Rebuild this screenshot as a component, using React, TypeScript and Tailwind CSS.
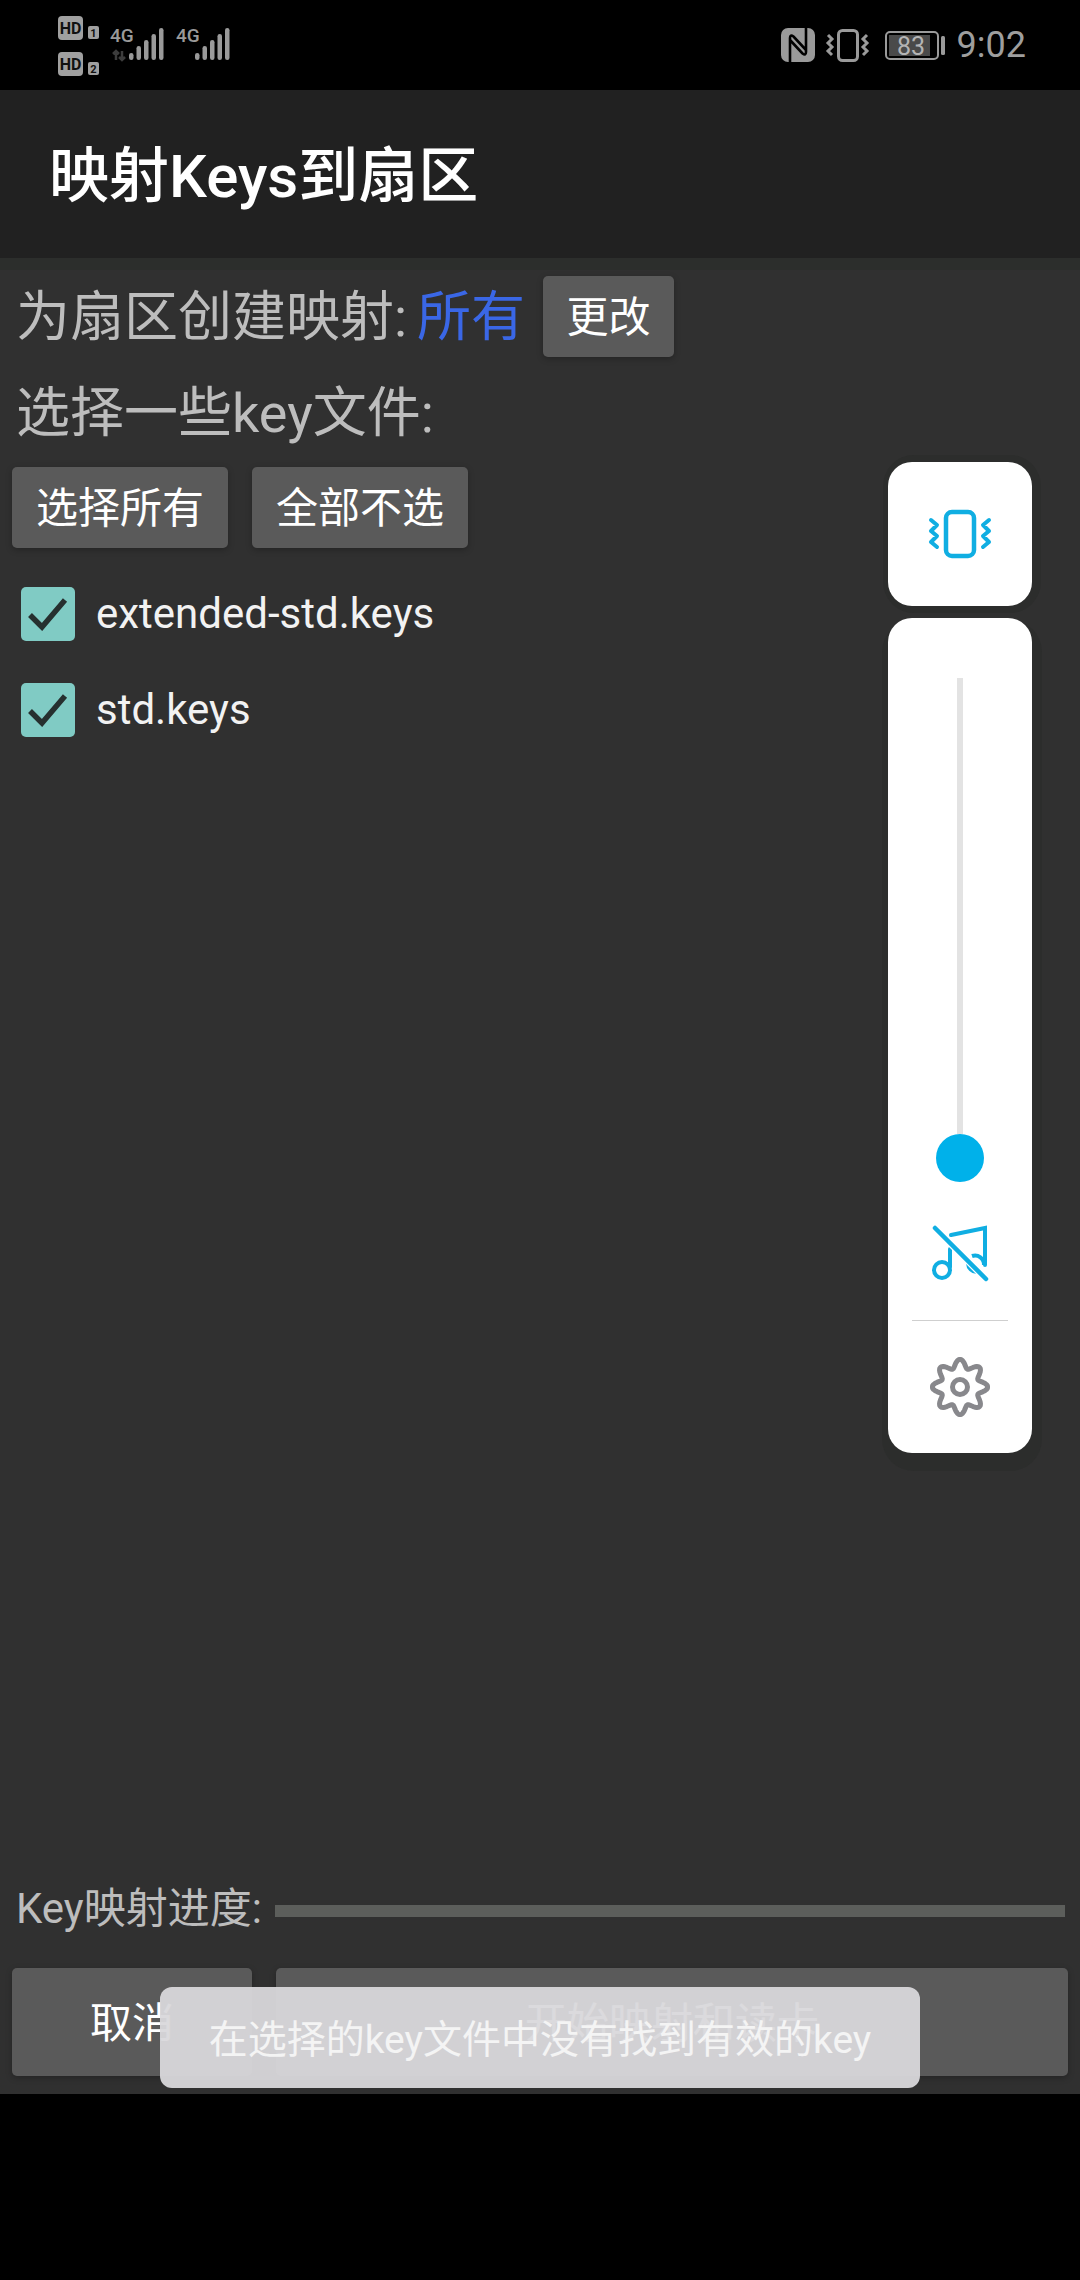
const cjk = "font-['Roboto','Noto_Sans_CJK_SC',sans-serif]";

// wavy outline for the 8 teeth of the settings gear
const gearPath =
  Array.from({ length: 128 }, (_, i) => {
    const a = (i / 128) * Math.PI * 2;
    const r = 23.5 + 4.2 * Math.cos(8 * a);
    return `${i === 0 ? "M" : "L"}${(30 + r * Math.sin(a)).toFixed(2)} ${(30 - r * Math.cos(a)).toFixed(2)}`;
  }).join("") + "Z";

function SignalBars({ x }: { x: number }) {
  const heights = [7, 14, 20, 26, 32];
  return (
    <>
      {heights.map((h, i) => (
        <rect key={i} x={x + i * 7.5} y={60 - h} width="4.5" height={h} rx="2.2" fill="#9a9a9a" />
      ))}
    </>
  );
}

function LeftStatus() {
  return (
    <svg width="176" height="90" viewBox="58 0 176 90">
      <rect x="58" y="16" width="25" height="24" rx="4" fill="#a0a0a0" />
      <text x="70.5" y="34" textAnchor="middle" fontSize="16" fontWeight="700" fontFamily="Roboto" fill="#111">HD</text>
      <rect x="88" y="26" width="11" height="13" rx="2" fill="#a0a0a0" />
      <text x="93.5" y="37" textAnchor="middle" fontSize="11" fontWeight="700" fontFamily="Roboto" fill="#111">1</text>
      <rect x="58" y="52" width="25" height="24" rx="4" fill="#a0a0a0" />
      <text x="70.5" y="70" textAnchor="middle" fontSize="16" fontWeight="700" fontFamily="Roboto" fill="#111">HD</text>
      <rect x="88" y="62" width="11" height="13" rx="2" fill="#a0a0a0" />
      <text x="93.5" y="73" textAnchor="middle" fontSize="11" fontWeight="700" fontFamily="Roboto" fill="#111">2</text>
      <text x="110" y="42" fontSize="19" fontWeight="500" fontFamily="Roboto" fill="#9a9a9a">4G</text>
      <path d="M116 60v-9m-3 3l3-3 3 3M122 51v9m-3-3l3 3 3-3" stroke="#3c3c3c" strokeWidth="2.5" fill="none" />
      <SignalBars x={129} />
      <text x="176" y="42" fontSize="19" fontWeight="500" fontFamily="Roboto" fill="#9a9a9a">4G</text>
      <SignalBars x={195} />
    </svg>
  );
}

function RightStatus() {
  return (
    <div className="flex items-center">
      <svg width="164" height="90" viewBox="782 0 164 90">
        <rect x="782" y="28" width="34" height="34" rx="7" fill="#9a9a9a" />
        <path d="M791 62V38q0-4 3.500-1.500L807 50M807 28v24q0 4-3.500 1.500L791 40" fill="none" stroke="#000000" strokeWidth="2.6" />
        <rect x="839.500" y="30.500" width="19" height="30" rx="4" fill="none" stroke="#9a9a9a" strokeWidth="3" />
        <path d="M829 35l4 4-4 4 4 4-4 4 4 4M868 35l-4 4 4 4-4 4 4 4-4 4" fill="none" stroke="#9a9a9a" strokeWidth="3" />
        <rect x="887" y="32" width="52" height="27" rx="4" fill="none" stroke="#9a9a9a" strokeWidth="2" />
        <rect x="890" y="35" width="41" height="21" fill="#4a4a4a" />
        <text x="912" y="55" textAnchor="middle" fontSize="25" fontFamily="Roboto" fill="#b4b4b4">83</text>
        <rect x="942" y="36" width="4" height="19" rx="1.5" fill="#9a9a9a" />
      </svg>
      <span className="ml-[12px] font-['Roboto',sans-serif] text-[36px] leading-none text-[#9e9e9e]">9:02</span>
    </div>
  );
}

function Checkbox({ label }: { label: string }) {
  return (
    <div className="flex items-center pl-[21px]">
      <div className="flex h-[54px] w-[54px] items-center justify-center rounded-[5px] bg-[#80cbc4]">
        <svg width="42" height="34" viewBox="0 0 42 34">
          <path d="M3 18l12 12L38 3" fill="none" stroke="#26302f" strokeWidth="5.5" />
        </svg>
      </div>
      <span className="ml-[21px] font-['Roboto',sans-serif] text-[42px] leading-none text-[#f2f2f2]">{label}</span>
    </div>
  );
}

function VolumePanel() {
  return (
    <div className="absolute left-[888px] top-[462px] flex w-[144px] flex-col gap-[12px]">
      <div className="flex h-[144px] items-center justify-center rounded-[24px] bg-white shadow-[2px_0_0_7px_#2c2d2c]">
        <svg width="64" height="56" viewBox="0 0 64 56" fill="none" stroke="#10aee2" strokeLinecap="round">
          <rect x="18" y="6" width="28" height="44" rx="6" strokeWidth="4.5" />
          <path d="M3 14l6 5-6 6 6 5-6 6 6 5M61 14l-6 5 6 6-6 5 6 6-6 5" strokeWidth="4" strokeLinejoin="round" />
        </svg>
      </div>
      <div className="flex h-[835px] flex-col items-center rounded-[24px] bg-white pt-[60px] shadow-[2px_10px_0_8px_#2c2d2c]">
        <div className="h-[456px] w-[6px] bg-[#e3e3e3]" />
        <div className="h-[48px] w-[48px] rounded-full bg-[#00b1ea]" />
        <svg className="mt-[41px]" width="60" height="60" viewBox="0 0 60 60" fill="none" stroke="#10aee2" strokeLinecap="round" strokeWidth="4">
          <circle cx="12" cy="47" r="8" />
          <path d="M20 44V26M21 12l34-7v37" />
          <path d="M42 33a9 9 0 0 1 12 9" strokeLinecap="butt" />
          <path d="M37 37A10 10 0 0 0 50 50Z" fill="#10aee2" stroke="none" />
          <path d="M5 5l51 51" stroke="#ffffff" strokeWidth="7" strokeLinecap="butt" />
          <path d="M5 5l51 51" strokeWidth="4.5" />
        </svg>
        <div className="mt-[37px] h-[1px] w-[96px] bg-[#cfcfcf]" />
        <svg className="mt-[36px]" width="60" height="60" viewBox="0 0 60 60" fill="none" stroke="#88888c" strokeWidth="5" strokeLinejoin="round">
          <path d={gearPath} />
          <circle cx="30" cy="30" r="7.5" />
        </svg>
      </div>
    </div>
  );
}

export default function App() {
  const btn = "flex items-center justify-center rounded-[5px] bg-[#5a5a5a] pt-[3px] text-[42px] leading-none text-white shadow-[0_2px_6px_rgba(0,0,0,0.25)]";
  return (
    <div className={`relative flex h-[2280px] w-[1080px] flex-col overflow-hidden bg-black ${cjk}`}>
      {/* Status bar */}
      <div className="flex h-[90px] items-center justify-between pl-[58px] pr-[54px]">
        <LeftStatus />
        <RightStatus />
      </div>

      {/* App bar */}
      <div className="flex h-[168px] items-center bg-[#212121] pl-[49px] pt-[6px]">
        <h1 className="text-[60px] font-medium leading-none text-white">映射Keys到扇区</h1>
      </div>

      {/* Content */}
      <div className="flex h-[1836px] flex-col bg-[#303030]">
        <div className="h-[12px] bg-[#2c2e2c]" />
        <div className="flex h-[87px] items-end pl-[16px]">
          <div className="flex h-[81px] items-center pt-[2px] text-[54px] leading-none text-[#bdbdbd]">
            为扇区创建映射:
            <span className="ml-[10px] text-[#3a67e6]">所有</span>
          </div>
          <button className={`${btn} ml-[18px] h-[81px] w-[131px]`}>更改</button>
        </div>
        <div className="flex h-[110px] items-center pl-[16px] pt-[4px] text-[54px] leading-none text-[#bdbdbd]">选择一些key文件:</div>
        <div className="flex gap-[24px] pl-[12px]">
          <button className={`${btn} h-[81px] w-[216px]`}>选择所有</button>
          <button className={`${btn} h-[81px] w-[216px]`}>全部不选</button>
        </div>
        <div className="mt-[39px] flex flex-col gap-[42px]">
          <Checkbox label="extended-std.keys" />
          <Checkbox label="std.keys" />
        </div>

        <div className="mt-auto flex items-center pl-[16px] pr-[15px]">
          <span className="text-[42px] leading-none text-[#bdbdbd]">Key映射进度:</span>
          <div className="ml-[13px] mt-[3px] h-[12px] flex-1 bg-[#5c5e5b]" />
        </div>
        <div className="mb-[18px] mt-[38px] flex gap-[24px] px-[12px]">
          <button className={`${btn} h-[108px] w-[240px]`}>取消</button>
          <button className={`${btn} h-[108px] flex-1`}>开始映射和读卡</button>
        </div>
      </div>

      <VolumePanel />

      {/* Toast */}
      <div className="absolute left-[160px] top-[1987px] flex h-[101px] w-[760px] items-center justify-center rounded-[12px] bg-[#d9d8db]/95 pt-[6px] text-[39px] leading-none text-[#f4f4f4]">
        在选择的key文件中没有找到有效的key
      </div>
    </div>
  );
}
